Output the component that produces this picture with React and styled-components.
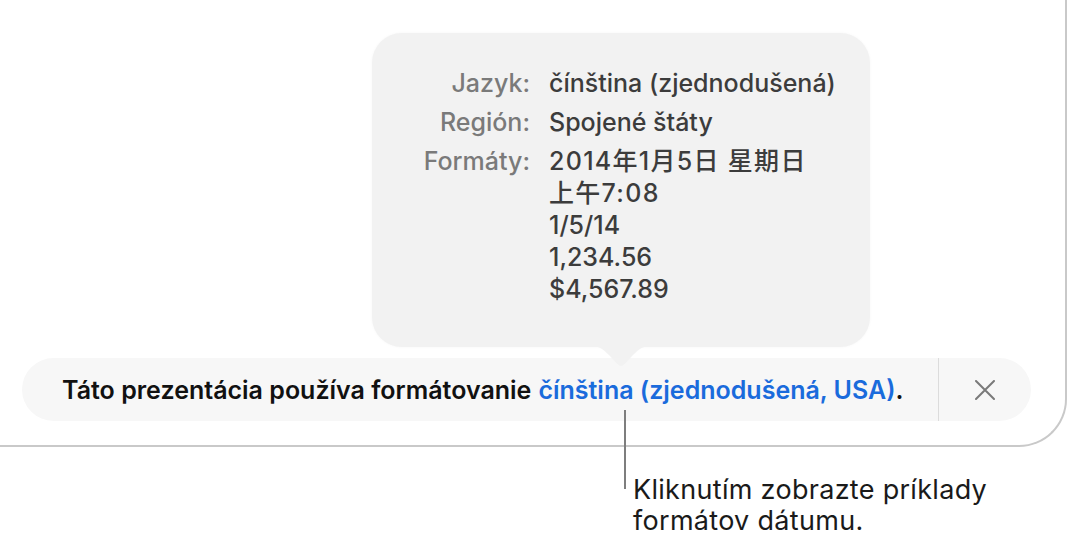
import styled, { createGlobalStyle } from 'styled-components'

const GlobalStyle = createGlobalStyle`
  html, body {
    margin: 0;
    padding: 0;
    background: #ffffff;
    font-family: Inter, "Noto Sans", "Noto Sans CJK SC", sans-serif;
  }
`

const Page = styled.div`
  width: 1069px;
  height: 543px;
  overflow: hidden;
  position: relative;
`

const Window = styled.div`
  box-sizing: border-box;
  width: 1067px;
  height: 447px;
  border-right: 2px solid #c9c9c9;
  border-bottom: 2px solid #c9c9c9;
  border-bottom-right-radius: 48px;
  display: flex;
  flex-direction: column;
`

const Popover = styled.div`
  position: relative;
  z-index: 1;
  box-sizing: border-box;
  margin: 33px 0 0 372px;
  width: 498px;
  height: 314px;
  padding: 34px 0 0 0;
  background: #f2f2f2;
  border-radius: 30px;
  box-shadow: 0 0 3px rgba(0, 0, 0, 0.04);
`

const Arrow = styled.svg`
  position: absolute;
  left: 50%;
  bottom: -21px;
  margin-left: -30px;
`

const InfoGrid = styled.div`
  display: grid;
  grid-template-columns: 158px auto;
  column-gap: 19px;
  row-gap: 7px;
  font-size: 25px;
  line-height: 32px;
  font-weight: 500;
`

const Label = styled.div`
  text-align: right;
  color: #7a7a7a;
`

const Value = styled.div`
  color: #3c3c3c;
  white-space: nowrap;
`

const Line = styled.div`
  letter-spacing: ${(p) => (p.$cjk ? '1.3px' : '0')};
`

const Bar = styled.div`
  display: flex;
  align-items: stretch;
  margin: 11px 0 0 22px;
  width: 1009px;
  height: 63px;
  background: #f7f7f7;
  border-radius: 32px;
`

const Message = styled.div`
  flex: 1;
  display: flex;
  align-items: center;
  padding-left: 40px;
  font-size: 25px;
  font-weight: 600;
  color: #111111;
  white-space: nowrap;
`

const Link = styled.span`
  color: #1a6bdc;
  margin-left: 7px;
`

const Divider = styled.div`
  width: 1px;
  background: #dcdcdc;
`

const CloseButton = styled.div`
  width: 92px;
  display: flex;
  align-items: center;
  justify-content: center;
`

const Annotation = styled.div`
  position: relative;
  z-index: 2;
  display: flex;
  margin: -37px 0 0 624px;
`

const Leader = styled.div`
  width: 2px;
  height: 79px;
  background: #7e7e7e;
`

const Note = styled.div`
  margin: 64px 0 0 7px;
  font-size: 27px;
  line-height: 31px;
  letter-spacing: 0.3px;
  color: #1a1a1a;
`

function CloseIcon() {
  return (
    <svg width="20" height="20" viewBox="0 0 20 20">
      <path d="M1 1 L19 19 M19 1 L1 19" stroke="#7a7a7a" strokeWidth="2" strokeLinecap="round" />
    </svg>
  )
}

const rows = [
  { label: 'Jazyk:', lines: ['čínština (zjednodušená)'] },
  { label: 'Región:', lines: ['Spojené štáty'] },
  { label: 'Formáty:', lines: ['2014年1月5日 星期日', '上午7:08', '1/5/14', '1,234.56', '$4,567.89'] },
]

const hasCjk = (s) => /[\u4e00-\u9fff]/.test(s)

export default function App() {
  return (
    <Page>
      <GlobalStyle />
      <Window>
        <Popover>
          <InfoGrid>
            {rows.map((r) => [
              <Label key={r.label}>{r.label}</Label>,
              <Value key={r.label + 'v'}>
                {r.lines.map((l) => (
                  <Line key={l} $cjk={hasCjk(l)}>{l}</Line>
                ))}
              </Value>,
            ])}
          </InfoGrid>
          <Arrow width="60" height="22" viewBox="0 0 60 22">
            <path d="M0 0 L60 0 C52 0 48 3 42 9 L33 18.5 C31.5 20.2 28.5 20.2 27 18.5 L18 9 C12 3 8 0 0 0 Z" fill="#f2f2f2" />
          </Arrow>
        </Popover>
        <Bar>
          <Message>
            Táto prezentácia používa formátovanie
            <Link>čínština (zjednodušená, USA)</Link>.
          </Message>
          <Divider />
          <CloseButton>
            <CloseIcon />
          </CloseButton>
        </Bar>
      </Window>
      <Annotation>
        <Leader />
        <Note>
          Kliknutím zobrazte príklady
          <br />
          formátov dátumu.
        </Note>
      </Annotation>
    </Page>
  )
}
